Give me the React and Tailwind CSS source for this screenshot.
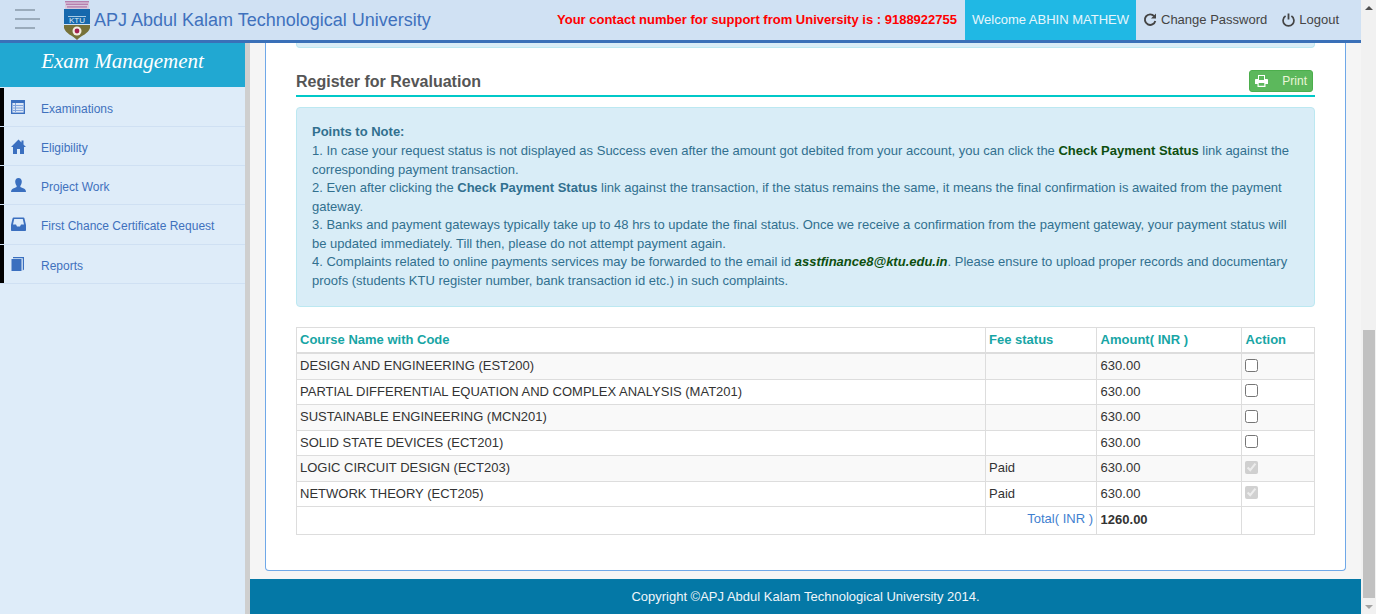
import React from "react";

const BLUE = "#3a6fbf";

function ListIcon() {
  return (
    <svg width="14" height="14" viewBox="0 0 14 14" className="block">
      <rect x="0.7" y="0.7" width="12.6" height="12.6" fill="#dbe6f6" stroke={BLUE} strokeWidth="1.4" />
      <rect x="1" y="1" width="12" height="2" fill={BLUE} />
      <g fill="#7fa3dc">
        <rect x="4" y="3" width="1" height="9" />
        <rect x="2" y="5" width="10" height="1" />
        <rect x="2" y="7.5" width="10" height="1" />
        <rect x="2" y="10" width="10" height="1" />
      </g>
    </svg>
  );
}

function HomeIcon() {
  return (
    <svg width="15" height="15" viewBox="0 0 15 15" className="block">
      <path fill={BLUE} d="M7.5 0.5 10.5 3.4V1.5H12.5V5.4L15 8H13V15H9V10H6V15H2V8H0Z" />
    </svg>
  );
}

function UserIcon() {
  return (
    <svg width="15" height="14" viewBox="0 0 15 14" className="block">
      <path fill={BLUE} d="M7.5 0C9.6 0 10.8 1.5 10.8 3.6 10.8 5.6 9.8 7.4 9.3 8 9.1 9 10 9.5 11.5 10 13.5 10.7 15 11.5 15 14H0C0 11.5 1.5 10.7 3.5 10 5 9.5 5.9 9 5.7 8 5.2 7.4 4.2 5.6 4.2 3.6 4.2 1.5 5.4 0 7.5 0Z" />
    </svg>
  );
}

function InboxIcon() {
  return (
    <svg width="15" height="14" viewBox="0 0 15 14" className="block">
      <path
        fill={BLUE}
        fillRule="evenodd"
        d="M2.5 0.5H12.5C13 0.5 13.3 0.8 13.4 1.2L15 8V13C15 13.6 14.6 14 14 14H1C0.4 14 0 13.6 0 13V8L1.6 1.2C1.7 0.8 2 0.5 2.5 0.5ZM3.2 2 2 7.5H5L6 9.5H9L10 7.5H13L11.8 2Z"
      />
    </svg>
  );
}

function BookIcon() {
  return (
    <svg width="14" height="14" viewBox="0 0 14 14" className="block">
      <path fill={BLUE} d="M0.5 2H10.5V14H0.5Z" />
      <path fill={BLUE} d="M2 0H13V12.5L11.8 13.5V1.2H2Z" />
    </svg>
  );
}

function RefreshIcon() {
  return (
    <svg width="14" height="14" viewBox="0 0 14 14" className="block shrink-0" fill="none">
      <path d="M11.2 3.2A5.3 5.3 0 1 0 12.3 8" stroke="#444" strokeWidth="1.9" />
      <path d="M13 0.5V5.5H8Z" fill="#444" />
    </svg>
  );
}

function PowerIcon() {
  return (
    <svg width="13" height="14" viewBox="0 0 13 14" className="block shrink-0" fill="none">
      <path d="M3.6 3A5.4 5.4 0 1 0 9.4 3" stroke="#444" strokeWidth="1.7" />
      <path d="M6.5 0.5V6.5" stroke="#444" strokeWidth="1.8" />
    </svg>
  );
}

function PrintIcon() {
  return (
    <svg width="13" height="12" viewBox="0 0 13 12" className="block">
      <path
        fill="#ffffff"
        fillRule="evenodd"
        d="M3 0H10V4H12C12.6 4 13 4.4 13 5V9H10.5V12H2.5V9H0V5C0 4.4 0.4 4 1 4H3ZM4 1V5H9V1ZM3.7 8V10.8H9.3V8Z"
      />
    </svg>
  );
}

function Logo() {
  return (
    <svg width="26" height="40" viewBox="0 0 26 40" className="block">
      <rect x="1" y="1" width="24" height="8" fill="#d9c9dc" />
      <g fill="#b77fae">
        <rect x="1" y="1" width="24" height="1.4" />
        <rect x="2" y="3.6" width="22" height="1.4" />
        <rect x="3" y="6.2" width="20" height="1.4" />
      </g>
      <rect x="0" y="9" width="26" height="15" fill="#1668ad" />
      <rect x="4" y="16" width="18" height="1" fill="#a9cbe6" />
      <text x="13" y="23" textAnchor="middle" fontSize="8" fill="#dfeaf4" fontFamily="Liberation Sans, sans-serif">KTU</text>
      <path d="M0 25H26V28C24 34 18 35 13 40 8 35 2 34 0 28Z" fill="#777138" />
      <circle cx="13" cy="31" r="4.5" fill="#f2ece0" />
      <circle cx="13" cy="31" r="2.4" fill="#a3214f" />
    </svg>
  );
}

const MENU = [
  { label: "Examinations", icon: <ListIcon />, h: "h-[39px]" },
  { label: "Eligibility", icon: <HomeIcon />, h: "h-[39px]" },
  { label: "Project Work", icon: <UserIcon />, h: "h-[39px]" },
  { label: "First Chance Certificate Request", icon: <InboxIcon />, h: "h-[40px]" },
  { label: "Reports", icon: <BookIcon />, h: "h-[39px]" },
];

const COURSES = [
  { name: "DESIGN AND ENGINEERING (EST200)", status: "", paid: false },
  { name: "PARTIAL DIFFERENTIAL EQUATION AND COMPLEX ANALYSIS (MAT201)", status: "", paid: false },
  { name: "SUSTAINABLE ENGINEERING (MCN201)", status: "", paid: false },
  { name: "SOLID STATE DEVICES (ECT201)", status: "", paid: false },
  { name: "LOGIC CIRCUIT DESIGN (ECT203)", status: "Paid", paid: true },
  { name: "NETWORK THEORY (ECT205)", status: "Paid", paid: true },
];

function Header() {
  return (
    <header className="h-[43px] shrink-0 flex items-start bg-[#d0e1f3] border-b-[3px] border-[#3a70b8]">
      <div className="w-[64px] shrink-0 pl-[15px] pt-[9px] flex flex-col gap-[7px]">
        <div className="w-[20px] h-[2px] bg-[#9aabbb]" />
        <div className="w-[25px] h-[2px] bg-[#9aabbb]" />
        <div className="w-[20px] h-[2px] bg-[#9aabbb]" />
      </div>
      <Logo />
      <div className="ml-[4px] h-[40px] leading-[40px] text-[18px] text-[#3f71bd]">
        APJ Abdul Kalam Technological University
      </div>
      <div className="ml-auto h-[40px] leading-[40px] text-[13px] font-bold text-[#ff0000] mr-[8px]">
        Your contact number for support from University is : 9188922755
      </div>
      <div className="w-[171px] h-[40px] leading-[40px] text-center text-[13px] text-[#e6f6fc] bg-[#20b8e4]">
        Welcome ABHIN MATHEW
      </div>
      <div className="w-[225px] shrink-0 h-[40px] flex items-center whitespace-nowrap text-[13px] text-[#444] pl-[7px] gap-[15px]">
        <span className="flex items-center gap-[4px]">
          <RefreshIcon />
          Change Password
        </span>
        <span className="flex items-center gap-[4px]">
          <PowerIcon />
          Logout
        </span>
      </div>
    </header>
  );
}

function Sidebar() {
  return (
    <aside className="w-[250px] shrink-0 bg-[#deecf9] border-r-[5px] border-[#cfcfcf]">
      <div className="h-[44px] mb-px pb-[6px] flex items-center justify-center bg-[#21a8d2] text-white text-[21px] italic font-['Liberation_Serif',serif]">
        Exam Management
      </div>
      {MENU.map((m) => (
        <div key={m.label} className={`${m.h} flex border-b border-[#cfe0f3]`}>
          <div className="w-[4px] bg-black" />
          <div className="w-[37px] pl-[7px] pt-[12px]">{m.icon}</div>
          <div className="text-[12px] text-[#3f71bd] pt-[13px] leading-[16px]">{m.label}</div>
        </div>
      ))}
    </aside>
  );
}

function Notes() {
  const strong = "font-bold text-[#0d4f10]";
  return (
    <div className="mt-[10px] h-[199.6px] p-[15px] text-[13px] leading-[18.57px] text-[#31708f] bg-[#d9edf7] border border-[#bce8f1] rounded">
      <div className="font-bold">Points to Note:</div>
      <div>
        1. In case your request status is not displayed as Success even after the amount got debited from your account, you can click the{" "}
        <b className={strong}>Check Payment Status</b> link against the corresponding payment transaction.
      </div>
      <div>
        2. Even after clicking the <b>Check Payment Status</b> link against the transaction, if the status remains the same, it means the final confirmation is awaited from the payment gateway.
      </div>
      <div>
        3. Banks and payment gateways typically take up to 48 hrs to update the final status. Once we receive a confirmation from the payment gateway, your payment status will be updated immediately. Till then, please do not attempt payment again.
      </div>
      <div>
        4. Complaints related to online payments services may be forwarded to the email id{" "}
        <b className={`${strong} italic`}>asstfinance8@ktu.edu.in</b>. Please ensure to upload proper records and documentary proofs (students KTU register number, bank transaction id etc.) in such complaints.
      </div>
    </div>
  );
}

function CourseTable() {
  const cell = "border border-[#ddd] p-[3px] align-top";
  const head = "border border-[#ddd] border-b-2 pt-[3px] pb-[2.5px] px-[3px] text-left font-bold text-[#17a5a5]";
  return (
    <table className="mt-[20px] w-[1018px] table-fixed border-collapse text-[13px] leading-[18.57px] text-[#333]">
      <colgroup>
        <col className="w-[689px]" />
        <col className="w-[111px]" />
        <col className="w-[145px]" />
        <col className="w-[73px]" />
      </colgroup>
      <thead>
        <tr>
          <th className={head}>Course Name with Code</th>
          <th className={head}>Fee status</th>
          <th className={`${head} pl-[3.6px]`}>Amount( INR )</th>
          <th className={`${head} pl-[3.6px]`}>Action</th>
        </tr>
      </thead>
      <tbody>
        {COURSES.map((c, i) => (
          <tr key={c.name} className={i % 2 === 0 ? "bg-[#f9f9f9]" : "bg-white"}>
            <td className={cell}>{c.name}</td>
            <td className={cell}>{c.status}</td>
            <td className={`${cell} pl-[3.6px]`}>630.00</td>
            <td className={cell}>
              <input
                type="checkbox"
                disabled={c.paid}
                defaultChecked={c.paid}
                className="block w-[13px] h-[13px] mt-[1.6px]"
              />
            </td>
          </tr>
        ))}
        <tr className="h-[28px]">
          <td className={cell}></td>
          <td className={`${cell} text-right text-[#3f7fd0]`}>Total( INR )</td>
          <td className={`${cell} pl-[3.6px] font-bold`}>
            <span className="block pt-px">1260.00</span>
          </td>
          <td className={cell}></td>
        </tr>
      </tbody>
    </table>
  );
}

function Scrollbar() {
  return (
    <div className="w-[15px] shrink-0 flex flex-col items-center bg-[#f1f1f1]">
      <div className="h-[15px] flex items-center justify-center">
        <div className="w-0 h-0 border-x-[4px] border-x-transparent border-b-[4px] border-b-[#505050]" />
      </div>
      <div className="flex-1 w-full pl-[2px] pr-px pt-[315px] pb-[1px]">
        <div className="h-full bg-[#c1c1c1]" />
      </div>
      <div className="h-[15px] flex items-center justify-center">
        <div className="w-0 h-0 border-x-[4px] border-x-transparent border-t-[4px] border-t-[#a3a3a3]" />
      </div>
    </div>
  );
}

export default function App() {
  return (
    <div className="w-[1376px] h-[614px] flex overflow-hidden font-['Liberation_Sans',Arial,sans-serif]">
      <div className="flex-1 min-w-0 flex flex-col">
        <Header />
        <div className="flex-1 min-h-0 flex">
          <Sidebar />
          <main className="flex-1 min-w-0 flex flex-col bg-[#f5f5f5]">
            <div className="flex-1 min-h-0 px-[15px]">
              <div className="h-[528px] bg-white border border-t-0 border-[#6fa8e8] rounded-b px-[30px]">
                <div className="h-[5px] bg-[#d9edf7] border border-t-0 border-[#bce8f1] rounded-b" />
                <div className="h-[49.4px] pt-[22px] flex items-start justify-between border-b-2 border-[#00c8c8]">
                  <h2 className="text-[16px] leading-[22px] pt-px font-bold text-[#555]">Register for Revaluation</h2>
                  <button className="w-[64px] h-[22px] mr-[2px] flex items-center justify-between pl-[5px] pr-[5px] text-[12px] text-[#eaf6d8] bg-[#5cb85c] border border-[#4cae4c] rounded-[3px]">
                    <PrintIcon />
                    Print
                  </button>
                </div>
                <Notes />
                <CourseTable />
              </div>
            </div>
            <footer className="h-[35px] shrink-0 flex items-center justify-center text-[13px] text-[#f0f6fa] bg-[#0478a6]">
              Copyright ©APJ Abdul Kalam Technological University 2014.
            </footer>
          </main>
        </div>
      </div>
      <Scrollbar />
    </div>
  );
}
